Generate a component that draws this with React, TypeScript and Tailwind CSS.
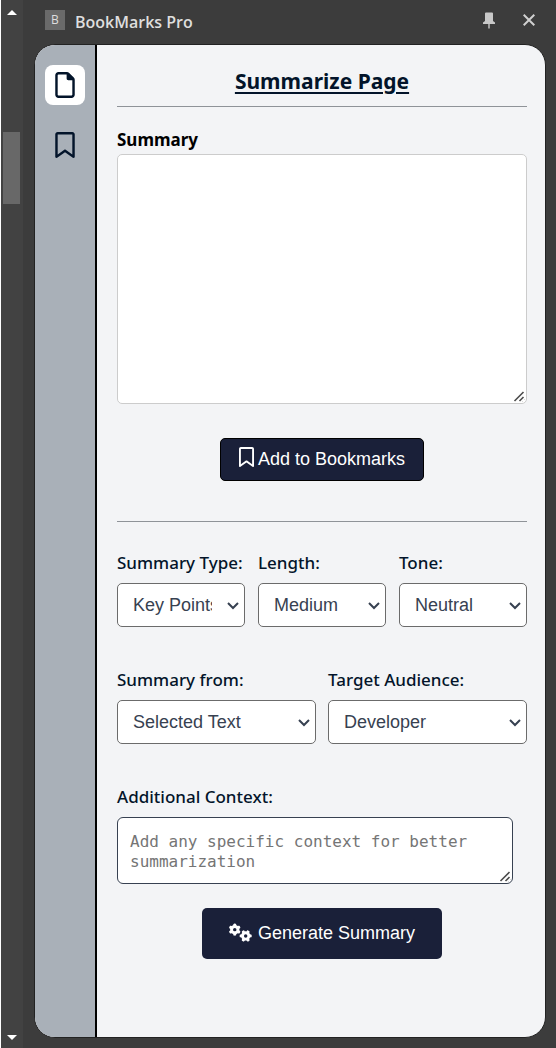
import type { ReactNode } from "react";
import { FaGears, FaRegBookmark, FaRegFile } from "react-icons/fa6";

function SelectField({ id, label, options }: { id: string; label: string; options: string[] }) {
  return (
    <div className="min-w-0 flex-1">
      <FieldLabel htmlFor={id}>{label}</FieldLabel>
      <div className="relative mt-2">
        <select
          id={id}
          className="block h-11 w-full appearance-none rounded-[5px] border border-[#6b6b6b] bg-white pr-8 pl-[15px] font-['Liberation_Sans',Arial,sans-serif] text-lg text-[#374151]"
        >
          {options.map((option) => (
            <option key={option}>{option}</option>
          ))}
        </select>
        <svg
          viewBox="0 0 12 8"
          aria-hidden="true"
          className="pointer-events-none absolute top-[19px] right-[6px] h-2 w-3 fill-none stroke-[#374151] stroke-2"
        >
          <path d="M1 1l5 5 5-5" />
        </svg>
      </div>
    </div>
  );
}

function FieldLabel({ htmlFor, children }: { htmlFor: string; children: ReactNode }) {
  return (
    <label htmlFor={htmlFor} className="block text-[17px] leading-6 font-medium whitespace-nowrap text-[#03142a]">
      {children}
    </label>
  );
}

function ResizeGrip() {
  return (
    <svg
      viewBox="0 0 12 12"
      aria-hidden="true"
      className="pointer-events-none absolute right-[2px] bottom-[2px] size-3 rounded-br-[4px] bg-white fill-none stroke-[#4d4d4d]"
    >
      <path d="M1.500 11L10.500 2M6.500 11L10.500 7" strokeWidth="1.600" />
    </svg>
  );
}

export default function App() {
  return (
    <div className="flex min-h-screen bg-[#3c3c3c] font-['Noto_Sans','Open_Sans',sans-serif]">
      <div className="flex w-[23px] shrink-0 flex-col items-center border-l border-white bg-[#424242] pr-px" aria-hidden="true">
        <svg viewBox="0 0 10 5" className="mt-[10px] h-[5px] w-[10px] fill-white">
          <path d="M0 5L5 0l5 5z" />
        </svg>
        <div className="mt-[117px] h-[72px] w-[17px] bg-[#686868]" />
        <svg viewBox="0 0 10 5" className="mt-auto mb-2 h-[5px] w-[10px] fill-white">
          <path d="M0 0l5 5 5-5z" />
        </svg>
      </div>

      <div className="flex min-w-0 flex-1 flex-col pr-[10px] pb-[10px] pl-[11px]">
        <header className="flex h-11 shrink-0 items-center pr-[11px] pl-[11px] text-[#dedede]">
          <span className="mb-1 flex size-5 items-center justify-center bg-[#6a6a6a] font-['Open_Sans',sans-serif] text-xs">B</span>
          <h1 className="ml-[10px] font-['Open_Sans',sans-serif] text-base font-semibold">BookMarks Pro</h1>
          <button type="button" aria-label="Pin panel" className="mb-1 ml-auto">
            <svg viewBox="0 0 12 17" className="h-[17px] w-3 fill-[#c8c8c8]">
              <path d="M3 0.500h6q1 0 1 1V9l2 1.500V12H6.700v4.500H5.300V12H0v-1.500L2 9V1.500q0-1 1-1z" />
            </svg>
          </button>
          <button type="button" aria-label="Close panel" className="mb-1 ml-7">
            <svg viewBox="0 0 12 12" className="size-3 fill-none stroke-[#d0d0d0] stroke-2">
              <path d="M0.700 0.700l10.600 10.600M11.300 0.700L0.700 11.300" />
            </svg>
          </button>
        </header>

        <div className="flex flex-1 overflow-hidden rounded-[21px] border border-[#222222] bg-[#f3f4f6] text-[#03142a]">
          <nav className="flex w-[62px] shrink-0 flex-col items-center gap-5 border-r-2 border-black bg-[#a9b0b8] pt-5">
            <button type="button" aria-label="Summarize page" className="flex size-10 items-center justify-center rounded-lg bg-white">
              <FaRegFile className="size-[26px]" />
            </button>
            <button type="button" aria-label="Bookmarks" className="flex size-10 items-center justify-center rounded-lg">
              <FaRegBookmark className="size-[26px]" />
            </button>
          </nav>

          <main className="min-w-0 flex-1 pt-5 pr-[18px] pb-10 pl-5">
            <h2 className="text-center text-[21px] leading-8 font-bold underline decoration-2 underline-offset-[3px]">Summarize Page</h2>
            <hr className="mt-[9px] border-[#8f9398]" />

            <label htmlFor="summary" className="mt-[21px] block text-[17px] leading-6 font-bold text-black">
              Summary
            </label>
            <div className="relative mt-[2px]">
              <textarea
                id="summary"
                className="block h-[250px] w-full rounded-[5px] border border-[#cccccc] bg-white p-3 font-['Liberation_Sans',Arial,sans-serif] text-base"
              />
              <ResizeGrip />
            </div>

            <button
              type="button"
              className="mx-auto mt-[34px] flex h-[43px] items-center gap-1 rounded-[5px] border border-black bg-[#1a2039] px-[18px] pb-[2px] font-['Liberation_Sans',Arial,sans-serif] text-lg text-white"
            >
              <FaRegBookmark className="mb-[3px] h-5 w-[15px]" />
              Add to Bookmarks
            </button>

            <hr className="mt-10 border-[#8f9398]" />

            <div className="mt-[29px] flex gap-[13px]">
              <SelectField id="type" label="Summary Type:" options={["Key Points", "Paragraph"]} />
              <SelectField id="length" label="Length:" options={["Medium", "Short", "Long"]} />
              <SelectField id="tone" label="Tone:" options={["Neutral", "Formal", "Casual"]} />
            </div>
            <div className="mt-[41px] flex gap-3">
              <SelectField id="source" label="Summary from:" options={["Selected Text", "Whole Page"]} />
              <SelectField id="audience" label="Target Audience:" options={["Developer", "General"]} />
            </div>

            <div className="mt-[41px]">
              <FieldLabel htmlFor="context">Additional Context:</FieldLabel>
              <div className="relative mt-2 mr-[14px]">
                <textarea
                  id="context"
                  placeholder="Add any specific context for better summarization"
                  className="block h-[67px] w-full overflow-hidden rounded-md border border-[#374151] bg-white px-3 pt-[14px] pb-3 font-['DejaVu_Sans_Mono',monospace] text-base leading-5 placeholder:text-[#757575]"
                />
                <ResizeGrip />
              </div>
            </div>

            <button
              type="button"
              className="mx-auto mt-6 flex h-[51px] items-center gap-[6px] rounded-[5px] bg-[#1a2039] px-[27px] pb-[2px] font-['Liberation_Sans',Arial,sans-serif] text-lg text-white"
            >
              <FaGears className="h-[19px] w-[23px]" />
              Generate Summary
            </button>
          </main>
        </div>
      </div>
    </div>
  );
}
